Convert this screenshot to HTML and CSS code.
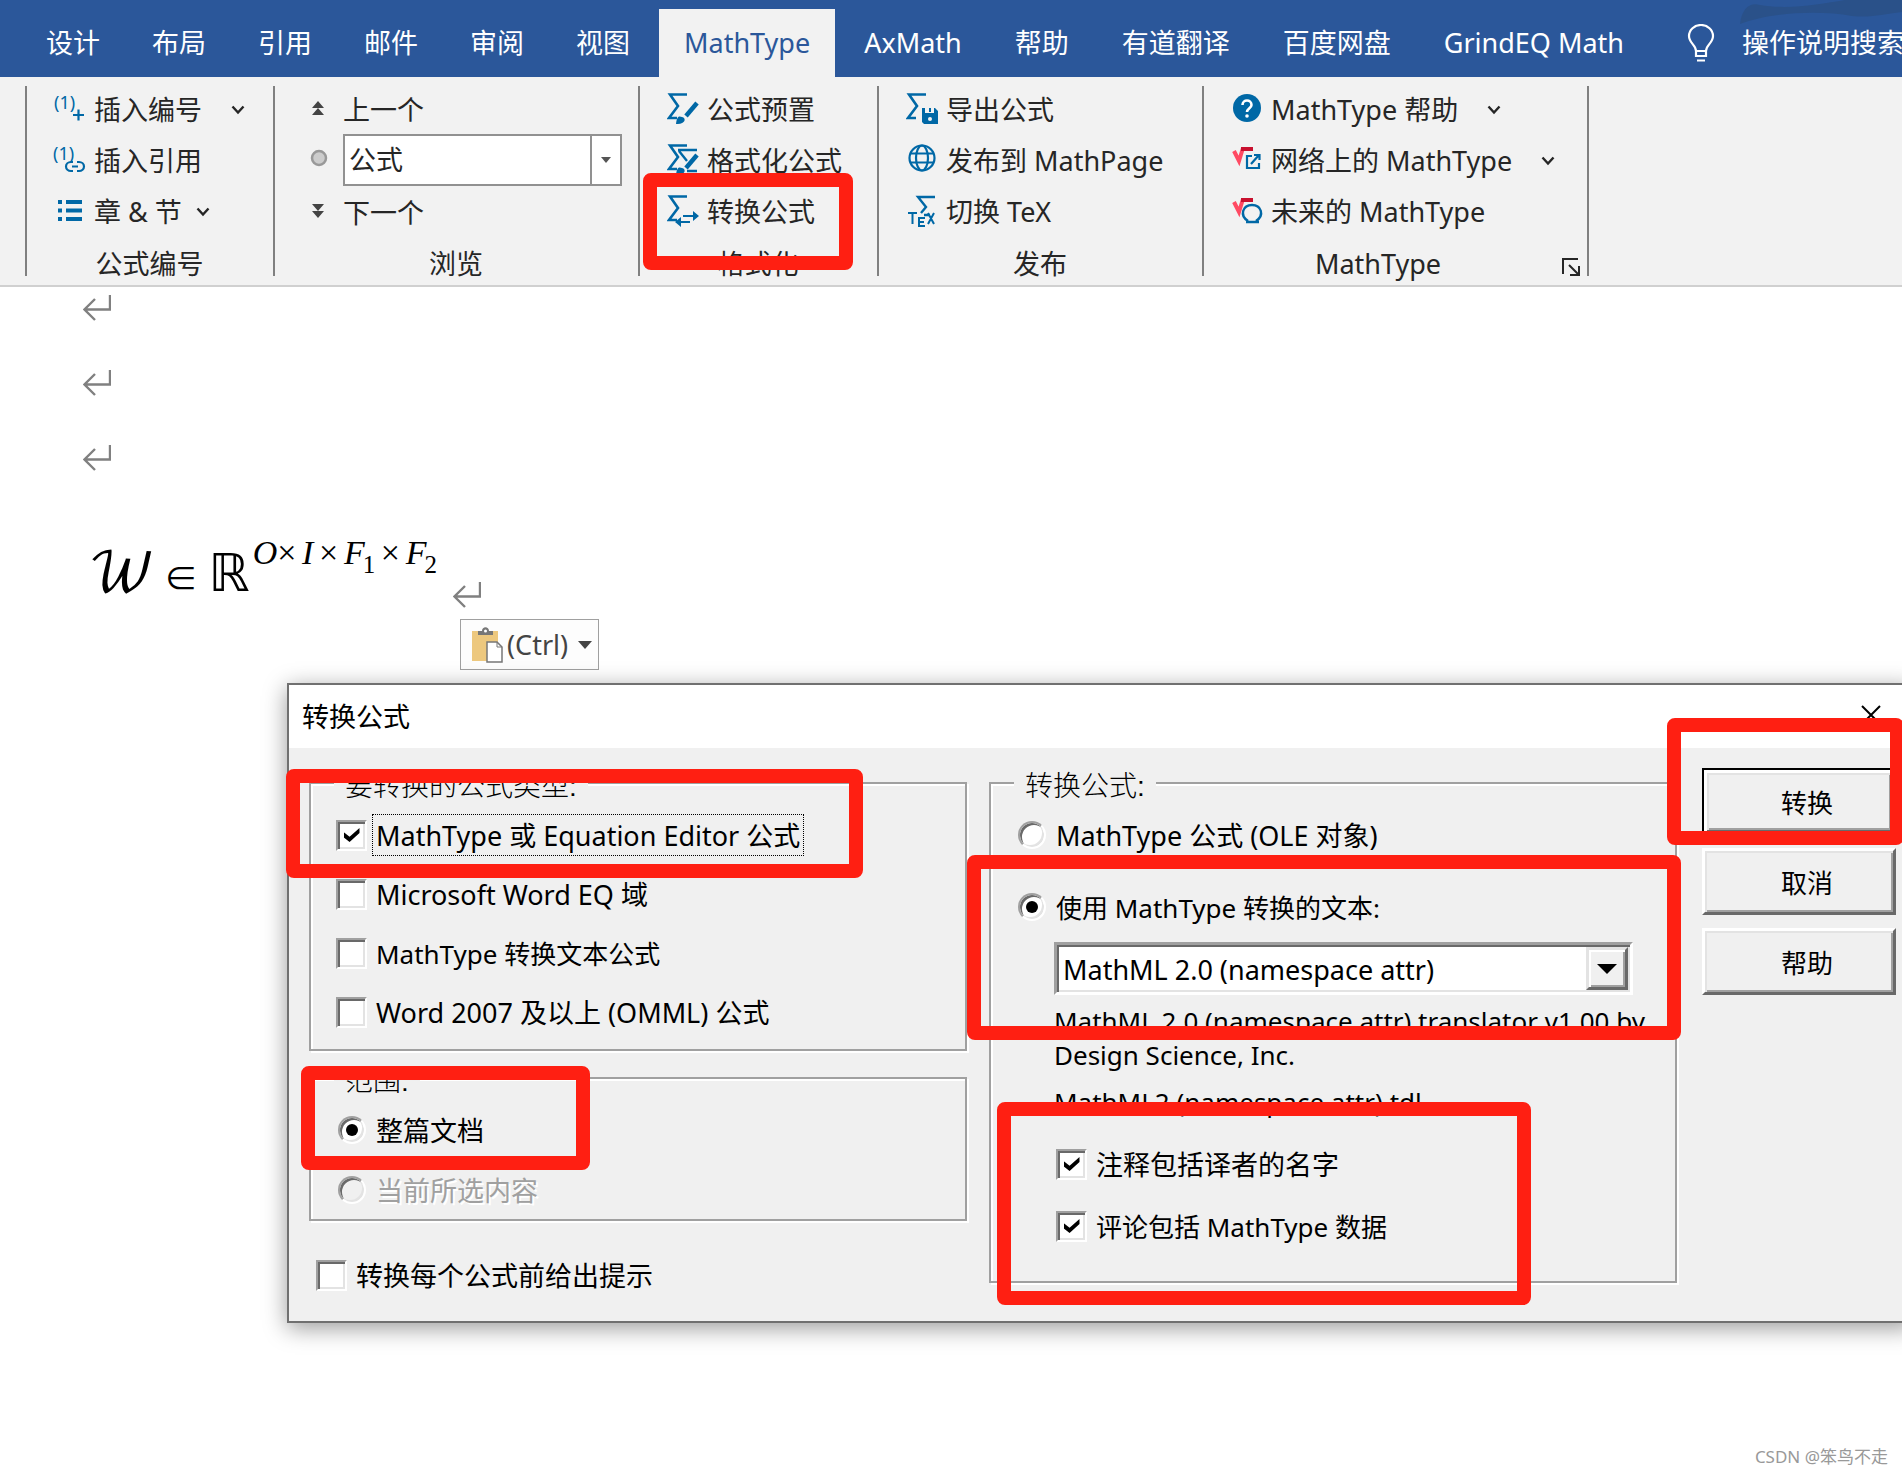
FILE: index.html
```html
<!DOCTYPE html>
<html lang="zh-CN">
<head>
<meta charset="utf-8">
<meta name="viewport" content="width=device-width, initial-scale=1">
<title>MathType - 转换公式</title>
<link rel="stylesheet" href="styles.css">
</head>
<body>
<svg class="defs" aria-hidden="true">
  <symbol id="sigma" viewBox="0 0 32 32"><path d="M20 1.500H3l8 11.500-9 12h8" fill="none" stroke="currentColor" stroke-width="2.600"/></symbol>
  <symbol id="chevron" viewBox="0 0 14 10"><path d="M1.500 1.500 7 7.500l5.500-6" fill="none" stroke="currentColor" stroke-width="2.400"/></symbol>
  <symbol id="return" viewBox="0 0 28 26"><path d="M27 0v14.500H2M12 4 1.500 14.500 12 25" fill="none" stroke="currentColor" stroke-width="2.400"/></symbol>
</svg>

<header class="ribbon">
  <nav class="tabs">
    <svg class="swoosh" viewBox="0 0 162 28" aria-hidden="true"><path d="M0 24C2 8 10 2 20 5 50 10 80 4 105 0h57v12c-20 2-30 6-50 4C80 10 30 12 0 24Z" fill="#2a5189"/></svg>
    <button class="tab">设计</button>
    <button class="tab">布局</button>
    <button class="tab">引用</button>
    <button class="tab">邮件</button>
    <button class="tab">审阅</button>
    <button class="tab">视图</button>
    <button class="tab active">MathType</button>
    <button class="tab">AxMath</button>
    <button class="tab">帮助</button>
    <button class="tab">有道翻译</button>
    <button class="tab">百度网盘</button>
    <button class="tab">GrindEQ Math</button>
    <button class="tab tell-me"><svg width="28" height="38" viewBox="0 0 28 38" fill="none" stroke="#fff" stroke-width="2.200"><path d="M9 27c0-6-7-8-7-15a12 11 0 0 1 24 0c0 7-7 9-7 15v5H9Zm0 0h10M10 36.500h8"/></svg>操作说明搜索</button>
  </nav>

  <div class="groups">
    <section class="group numbering">
      <button class="item"><svg class="icon" viewBox="0 0 32 32"><text x="0" y="16" class="num">(1)</text><path d="M19 22h11M24.500 16.500v11" stroke="currentColor" stroke-width="2.200"/></svg>插入编号<svg class="chev far"><use href="#chevron"/></svg></button>
      <button class="item"><svg class="icon" viewBox="0 0 32 32"><text x="-1" y="16" class="num">(1)</text><path d="M19 27h-2a5 4.500 0 0 1 0-9h2M23 18h2a5 4.500 0 0 1 0 9h-2M18 22.500h6" fill="none" stroke="currentColor" stroke-width="2.200"/></svg>插入引用</button>
      <button class="item"><svg class="icon" viewBox="0 0 32 32"><path d="M4 7h4M4 15.500h4M4 24h4M12 7h16M12 15.500h16M12 24h16" stroke="currentColor" stroke-width="4"/></svg>章 &amp; 节<svg class="chev"><use href="#chevron"/></svg></button>
      <h2 class="caption">公式编号</h2>
    </section>

    <section class="group browse">
      <button class="item"><svg class="small" viewBox="0 0 24 24"><path d="m12 4 6 7H6ZM12 11l6 7H6Z"/></svg>上一个</button>
      <div class="item">
        <svg class="small" viewBox="0 0 24 24"><circle cx="13" cy="11" r="7" fill="#ccc" stroke="#999" stroke-width="2.500"/></svg>
        <div class="ribbon-combo">
          <select aria-label="浏览对象"><option>公式</option></select>
          <span class="ribbon-arrow"><svg width="10" height="6" viewBox="0 0 10 6"><path d="M0 0h10L5 6Z"/></svg></span>
        </div>
      </div>
      <button class="item"><svg class="small" viewBox="0 0 24 24"><path d="m12 11 6-7H6ZM12 18l6-7H6Z"/></svg>下一个</button>
      <h2 class="caption">浏览</h2>
    </section>

    <section class="group format">
      <button class="item"><svg class="icon" viewBox="0 0 32 32"><use href="#sigma"/><path d="M30 10 19 23" stroke="currentColor" stroke-width="4.500"/><path d="M9 31c1-8 3-8 6-7 5 1 3 8-6 7Z" fill="currentColor"/></svg>公式预置</button>
      <button class="item"><svg class="icon" viewBox="0 0 32 32"><use href="#sigma"/><path d="M11 6h19M12 7l8 10M20 27h10" stroke="currentColor" stroke-width="2.400"/><path d="M30 11 19 24" stroke="currentColor" stroke-width="4.500"/><path d="M9 31c1-8 3-8 6-7 5 1 3 8-6 7Z" fill="currentColor"/></svg>格式化公式</button>
      <button class="item"><svg class="icon" viewBox="0 0 32 32"><use href="#sigma"/><path d="M16 21h11M13 27h10" stroke="currentColor" stroke-width="2.200"/><path d="m26 16 6 5-6 5ZM14 22l-6 5 6 5Z" fill="currentColor"/></svg>转换公式</button>
      <h2 class="caption">格式化</h2>
    </section>

    <section class="group publish">
      <button class="item"><svg class="icon" viewBox="0 0 32 32"><use href="#sigma"/><path d="M16 15h3v5h9v-5h1l3 3v13H18l-2-2Z" fill="currentColor"/><path d="M24 15v4" stroke="currentColor" stroke-width="2"/><circle cx="24" cy="26" r="2" fill="#f2f2f2"/></svg>导出公式</button>
      <button class="item"><svg class="icon" viewBox="0 0 32 32" fill="none" stroke="currentColor" stroke-width="2.200"><circle cx="16" cy="14" r="12.500"/><ellipse cx="16" cy="14" rx="6" ry="12.500"/><path d="M5 9.500h22M5 18.500h22"/></svg>发布到 MathPage</button>
      <button class="item"><svg class="icon" viewBox="0 0 32 32"><path d="M29 2H12l8 10-5 6M18 20h6" fill="none" stroke="currentColor" stroke-width="2.400"/><path d="M2 18h9M6.500 18v11M19 23h-6v8h6M13 27h5M22 18l6 11M28 18l-6 11" fill="none" stroke="currentColor" stroke-width="2"/></svg>切换 TeX</button>
      <h2 class="caption">发布</h2>
    </section>

    <section class="group about">
      <button class="item"><svg class="icon" viewBox="0 0 32 32"><circle cx="16" cy="15" r="14" fill="currentColor"/><path d="M11.500 12c0-6 9-6 9 0 0 3-4.500 3.500-4.500 7" fill="none" stroke="#fff" stroke-width="2.600"/><circle cx="16" cy="23" r="1.800" fill="#fff"/></svg>MathType 帮助<svg class="chev far"><use href="#chevron"/></svg></button>
      <button class="item"><svg class="icon" viewBox="0 0 32 32" fill="none"><path d="M3 7l5 10 4-13" stroke="#ff4a63" stroke-width="4"/><path d="M10 5h12" stroke="#c8102e" stroke-width="4"/><path d="M21 12h-5v12h12v-5M23 11h5.500v5M28 11l-8 9" stroke="currentColor" stroke-width="2.200"/></svg>网络上的 MathType<svg class="chev far"><use href="#chevron"/></svg></button>
      <button class="item"><svg class="icon" viewBox="0 0 32 32" fill="none"><path d="M3 7l5 10 4-13" stroke="#ff4a63" stroke-width="4"/><path d="M10 5h12" stroke="#c8102e" stroke-width="4"/><path d="M17 26c-9-6-5-16 4-16s13 10 4 16M15 27h13" stroke="currentColor" stroke-width="2.400"/></svg>未来的 MathType</button>
      <h2 class="caption">MathType</h2>
      <button class="launcher" aria-label="MathType 选项"><svg width="18" height="18" viewBox="0 0 18 18" fill="none" stroke="#262626" stroke-width="2"><path d="M1 16V1h15M7 7l9 9M17 8v9H8"/></svg></button>
    </section>
  </div>
</header>

<main class="document">
  <p class="line"><svg class="mark"><use href="#return"/></svg></p>
  <p class="line"><svg class="mark"><use href="#return"/></svg></p>
  <p class="line"><svg class="mark"><use href="#return"/></svg></p>
  <p class="line equation">
    <span class="formula"><span class="script">𝒲</span><span class="in">∈</span><span class="reals">ℝ</span><span class="power"><i>O</i>×&#8198;<i>I</i>&#8198;×&#8198;<i>F</i><span class="index">1</span>&#8198;×&#8198;<i>F</i><span class="index">2</span></span></span>
    <svg class="mark"><use href="#return"/></svg>
  </p>
  <button class="paste"><svg width="32" height="36" viewBox="0 0 32 36"><path d="M1 4h26v30H1Z" fill="#edc87e"/><path d="M7 8V4h4c0-5 7-5 7 0h4v4Z" fill="#777"/><circle cx="14.500" cy="4" r="1.500" fill="#fff"/><path d="M16 15h10l5 5v15H16Z" fill="#fff" stroke="#777" stroke-width="1.500"/><path d="M26 15v5h5" fill="none" stroke="#777"/></svg><span>(Ctrl)</span><svg width="14" height="8" viewBox="0 0 14 8"><path d="M0 0h14L7 8Z" fill="#444"/></svg></button>
</main>

<form class="dialog" role="dialog" aria-labelledby="dialog-title">
  <div class="titlebar"><h1 id="dialog-title">转换公式</h1><button type="button" class="close" aria-label="关闭"><svg width="20" height="20" viewBox="0 0 20 20"><path d="m1 1 18 18M19 1 1 19" stroke="#000" stroke-width="2"/></svg></button></div>
  <div class="dialog-body">
    <div class="column">
      <fieldset class="types">
        <legend>要转换的公式类型:</legend>
        <div class="option"><input type="checkbox" id="t1" checked><label for="t1" class="focused">MathType 或 Equation Editor 公式</label></div>
        <div class="option"><input type="checkbox" id="t2"><label for="t2">Microsoft Word EQ 域</label></div>
        <div class="option"><input type="checkbox" id="t3"><label for="t3" class="snug">MathType 转换文本公式</label></div>
        <div class="option"><input type="checkbox" id="t4"><label for="t4">Word 2007 及以上 (OMML) 公式</label></div>
      </fieldset>
      <fieldset class="range">
        <legend>范围:</legend>
        <div class="option"><input type="radio" name="range" id="r1" checked><label for="r1">整篇文档</label></div>
        <div class="option"><input type="radio" name="range" id="r2" disabled><label for="r2">当前所选内容</label></div>
      </fieldset>
      <div class="option prompt"><input type="checkbox" id="p1"><label for="p1">转换每个公式前给出提示</label></div>
    </div>

    <fieldset class="target">
      <legend>转换公式:</legend>
      <div class="option"><input type="radio" name="target" id="o1"><label for="o1">MathType 公式 (OLE 对象)</label></div>
      <div class="option"><input type="radio" name="target" id="o2" checked><label for="o2" class="snug">使用 MathType 转换的文本:</label></div>
      <div class="combo">
        <select aria-label="转换器"><option>MathML 2.0 (namespace attr)</option></select>
        <span class="combo-arrow"><svg width="20" height="10" viewBox="0 0 20 10"><path d="M0 0h20L10 10Z"/></svg></span>
      </div>
      <p class="about-text">MathML 2.0 (namespace attr) translator v1.00 by Design Science, Inc.</p>
      <p class="about-text file">MathML2 (namespace attr).tdl</p>
      <div class="extras">
        <div class="option"><input type="checkbox" id="c1" checked><label for="c1">注释包括译者的名字</label></div>
        <div class="option"><input type="checkbox" id="c2" checked><label for="c2" class="snug">评论包括 MathType 数据</label></div>
      </div>
    </fieldset>

    <div class="actions">
      <button class="push default">转换</button>
      <button type="button" class="push">取消</button>
      <button type="button" class="push">帮助</button>
    </div>
  </div>
</form>

<div class="frame frame-convert"></div>
<div class="frame frame-types"></div>
<div class="frame frame-range"></div>
<div class="frame frame-target"></div>
<div class="frame frame-action"></div>
<div class="frame frame-extras"></div>
<footer class="watermark">CSDN @笨鸟不走</footer>
</body>
</html>
```

FILE: styles.css
```css
* { box-sizing: border-box; }

body {
  position: relative;
  min-height: 100vh;
  margin: 0;
  overflow: hidden;
  background: #fff;
  color: #262626;
  font: 27px/42px "Noto Sans", "Noto Sans CJK SC", sans-serif;
}

button, select { font: inherit; color: inherit; margin: 0; }
button { padding: 0; border: 0; background: none; white-space: nowrap; }
h1, h2, p { margin: 0; font-size: inherit; font-weight: 400; }
svg { flex: none; display: block; }
.defs { position: absolute; width: 0; height: 0; }

/* Ribbon */
.ribbon { background: #f2f2f2; border-bottom: 2px solid #d0d0d0; }
.tabs {
  position: relative;
  display: flex;
  height: 77px;
  padding: 9px 0 0 20px;
  overflow: hidden;
  background: #2b579a;
  color: #fff;
}
.swoosh { position: absolute; top: 0; right: 0; width: 162px; height: 28px; }
.tab { position: relative; flex: none; padding: 0 26px; }
.tab.active { margin: 0 3px; padding: 0 25px; background: #f2f2f2; color: #2b579a; }
.tab.active ~ .tab { padding: 0 27px 0 26px; }
.tab.tell-me { display: flex; align-items: center; gap: 27px; margin-left: 10px; }

.groups { display: flex; height: 208px; padding: 6px 0 0 25px; background: linear-gradient(#808080, #808080) 25px 9px / 2px 190px no-repeat; }
.group {
  position: relative;
  flex: none;
  display: flex;
  flex-direction: column;
  padding-right: 2px;
  background: linear-gradient(#808080, #808080) right 3px / 2px 190px no-repeat;
}
.numbering { width: 250px; padding-left: 29px; }
.browse { width: 365px; padding-left: 31px; }
.format { width: 239px; padding-left: 27px; }
.publish { width: 325px; padding-left: 27px; }
.about { width: 385px; padding-left: 27px; }
.item { display: flex; align-items: center; height: 52px; text-align: left; }
button.item { padding-top: 2px; }
.icon { width: 32px; height: 32px; margin: 0 8px 2px 0; overflow: visible; color: #0068a6; }
.num { font: 18px "Noto Sans", sans-serif; fill: currentColor; }
.small { width: 24px; height: 24px; margin: 0 13px 2px 0; fill: #444; }
.chev { width: 14px; height: 10px; margin-left: 14px; }
.chev.far { margin-left: 29px; }
.caption { padding: 6px 0 0; margin-left: -28px; text-align: center; }
.browse .caption { margin-left: -32px; }
.about .caption { padding-right: 34px; }
.launcher { position: absolute; right: 9px; bottom: 9px; }

.ribbon-combo { display: flex; width: 279px; height: 52px; border: 2px solid #919191; background: #fff; }
.ribbon-combo select { flex: 1; appearance: none; border: 0; padding: 0 4px; background: none; }
.ribbon-arrow { display: flex; align-items: center; justify-content: center; width: 30px; border-left: 2px solid #919191; fill: #555; }

/* Document */
.line { height: 75px; padding: 8px 0 0 83px; }
.mark { width: 28px; height: 26px; color: #808080; }
.equation { display: flex; height: 107px; padding: 0 0 0 88px; }
.equation .mark { margin: 70px 0 0 21px; }
.formula { width: 344px; padding-top: 24px; color: #000; font: 54px/64px "Liberation Serif", serif; white-space: nowrap; }
.script { font-family: "DejaVu Math TeX Gyre", "DejaVu Serif", serif; }
.in { margin: 0 11px 0 8px; font-size: 34px; line-height: 1; }
.reals { font-family: "DejaVu Sans", sans-serif; font-size: 52px; line-height: 1; }
.power { margin-left: 3px; font-size: 34px; line-height: 1; vertical-align: 27px; }
.index { margin-left: -2px; font-size: 25px; line-height: 1; vertical-align: -9px; }
.paste { display: flex; align-items: center; width: 139px; height: 51px; margin-left: 460px; padding-left: 10px; border: 1px solid #a0a0a0; background: #fdfdfd; color: #444; }
.paste span { margin: 0 10px 0 4px; }

/* Dialog */
.dialog {
  position: absolute;
  top: 683px;
  left: 287px;
  right: -12px;
  border: 2px solid #707070;
  background: #f0f0f0;
  color: #000;
  box-shadow: 0 5px 22px rgba(0, 0, 0, .4);
}
.titlebar { display: flex; justify-content: space-between; height: 63px; padding: 11px 31px 0 13px; background: #fff; }
.close { height: 38px; }
.dialog-body { display: grid; grid-template-columns: minmax(0, 660fr) minmax(0, 690fr) 197px; column-gap: 20px; align-items: start; padding: 16px 16px 25px 20px; }
fieldset {
  min-width: 0;
  margin: 0 2px 0 0;
  padding: 12px 0 16px 25px;
  border: 2px solid #a0a0a0;
  box-shadow: inset 2px 2px #fff, 2px 2px #fff;
}
legend { padding: 8px 11px 0; background: #f0f0f0; margin-left: -2px; font: 300 28px/30px "Liberation Sans", "Noto Sans CJK SC", sans-serif; }
.option { display: flex; align-items: center; height: 42px; margin-bottom: 17px; }
.option:last-child { margin-bottom: 0; }
.option label { margin-left: 5px; padding: 2px 3px 0; border: 1px solid transparent; line-height: 38px; white-space: nowrap; }
.option .focused { border: 1px dotted #000; }
.option .snug { font-size: 26px; }
.range { margin-top: 8px; padding-bottom: 8px; }
.range .option { margin-bottom: 18px; }
.range .option:last-child { margin-bottom: 0; }
.prompt { margin: 33px 0 0 7px; }

input {
  appearance: none;
  flex: none;
  display: grid;
  place-content: center;
  width: 31px;
  height: 31px;
  margin: 0;
  border: 2px solid;
  border-color: #a0a0a0 #fff #fff #a0a0a0;
  background: #fff;
  box-shadow: inset 2px 2px #696969, inset -2px -2px #e3e3e3;
}
input[type="radio"] { width: 28px; height: 28px; margin: 0 1px 0 2px; border-radius: 50%; }
input[type="checkbox"]:checked::before {
  content: "";
  width: 16px;
  height: 14px;
  background: #000;
  clip-path: polygon(0 28%, 38% 62%, 100% 0, 100% 36%, 38% 100%, 0 66%);
}
input[type="radio"]:checked::before { content: ""; width: 12px; height: 12px; border-radius: 50%; background: #000; }
input:disabled { background: #f0f0f0; }
input:disabled + label { color: #a0a0a0; text-shadow: 2px 2px #fff; }

.target { padding-bottom: 34px; }
.target > .option { margin-bottom: 30px; }
.target .combo { display: flex; height: 53px; margin: -16px 42px 9px 38px; border: 3px solid; border-color: #a0a0a0 #fff #fff #a0a0a0; background: #fff; box-shadow: inset 2px 2px #696969, inset -2px -2px #e3e3e3; padding: 2px; }
.combo select { flex: 1; appearance: none; border: 0; padding: 2px 4px 0; background: none; }
.combo-arrow { display: flex; align-items: center; justify-content: center; width: 42px; border: 3px solid; border-color: #e3e3e3 #696969 #696969 #e3e3e3; background: #f0f0f0; box-shadow: inset 2px 2px #fff, inset -2px -2px #a0a0a0; }
.about-text { margin: 0 20px 0 38px; font-size: 26px; line-height: 34px; }
.file { margin-top: 13px; }
.extras { margin: 24px 0 0 40px; }
.extras .option { margin-bottom: 20px; }
.extras .option:last-child { margin-bottom: 0; }

.actions { display: flex; flex-direction: column; gap: 13px; padding: 4px 0 0 3px; }
.push { height: 67px; padding: 2px 0 0 16px; border: 3px solid; border-color: #fff #696969 #696969 #fff; background: #f0f0f0; box-shadow: inset 2px 2px #e3e3e3, inset -2px -2px #a0a0a0; font-size: 26px; }
.push.default { border: 2px solid #000; box-shadow: inset 3px 3px #fff, inset -3px -3px #696969, inset 5px 5px #e3e3e3, inset -5px -5px #a0a0a0; }

/* Highlight frames drawn over the window */
.frame { position: absolute; border: 14px solid #ff1f12; border-radius: 8px; pointer-events: none; }
.frame-convert { left: 643px; top: 173px; width: 210px; height: 97px; }
.frame-types { left: 286px; top: 769px; width: 577px; height: 109px; }
.frame-range { left: 301px; top: 1066px; width: 289px; height: 104px; }
.frame-target { left: 967px; top: 855px; width: 714px; height: 185px; }
.frame-action { right: -2px; top: 718px; width: 237px; height: 127px; }
.frame-extras { left: 997px; top: 1102px; width: 534px; height: 203px; }

.watermark { position: absolute; right: 14px; bottom: 7px; color: #999; font-size: 17px; line-height: 22px; }
```
